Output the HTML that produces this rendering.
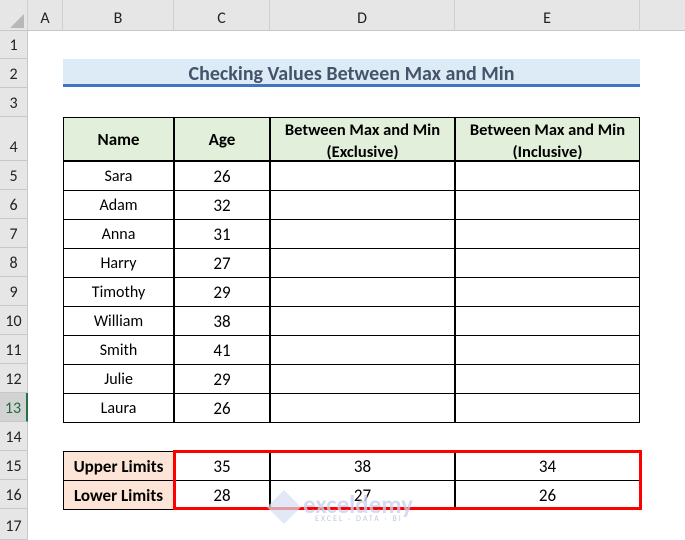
<!DOCTYPE html><html><head><style>
body{margin:0;width:685px;height:540px;overflow:hidden;background:#fff;font-family:Calibri,"Liberation Sans",sans-serif;position:relative}
.a{position:absolute;box-sizing:border-box}
.ch{top:0;height:31px;background:#e6e6e6;border-right:1px solid #d0d0d0;border-bottom:1px solid #c8c8c8;text-align:center;line-height:38px;font-size:16px;color:#222}
.rh{left:0;width:28px;background:#e6e6e6;border-bottom:1px solid #c8c8c8;border-right:1px solid #c8c8c8;text-align:center;font-size:16px;color:#222;display:flex;align-items:flex-end;justify-content:center;padding-bottom:3px}
.c{border:1px solid #000;display:flex;align-items:center;justify-content:center;font-size:16px;color:#000;text-align:center;margin:-1px 0 0 -1px}
.b{font-weight:bold}
</style></head><body>
<div class="a ch" style="left:0;width:28px"></div>
<div class="a" style="left:10px;top:14px;width:0;height:0;border-left:14px solid transparent;border-bottom:14px solid #b8b8b8"></div>
<div class="a ch" style="left:28px;width:35px">A</div>
<div class="a ch" style="left:63px;width:111px">B</div>
<div class="a ch" style="left:174px;width:96px">C</div>
<div class="a ch" style="left:270px;width:185px">D</div>
<div class="a ch" style="left:455px;width:185px">E</div>
<div class="a ch" style="left:640px;width:45px;border-right:none"></div>
<div class="a rh" style="top:31px;height:28px">1</div>
<div class="a rh" style="top:59px;height:29px">2</div>
<div class="a rh" style="top:88px;height:29px">3</div>
<div class="a rh" style="top:117px;height:44px">4</div>
<div class="a rh" style="top:161px;height:29px">5</div>
<div class="a rh" style="top:190px;height:29px">6</div>
<div class="a rh" style="top:219px;height:29px">7</div>
<div class="a rh" style="top:248px;height:29px">8</div>
<div class="a rh" style="top:277px;height:29px">9</div>
<div class="a rh" style="top:306px;height:29px">10</div>
<div class="a rh" style="top:335px;height:29px">11</div>
<div class="a rh" style="top:364px;height:29px">12</div>
<div class="a rh" style="top:393px;height:29px;background:#d2d2d2;color:#1e6b3a;border-right:2px solid #217346">13</div>
<div class="a rh" style="top:422px;height:29px">14</div>
<div class="a rh" style="top:451px;height:29px">15</div>
<div class="a rh" style="top:480px;height:29px">16</div>
<div class="a rh" style="top:509px;height:31px">17</div>

<div class="a" style="left:63px;top:59px;width:577px;height:28px;background:#ddebf7;border-bottom:3px solid #4472c4;text-align:center;font-weight:bold;font-size:20px;color:#44546a;line-height:30px">Checking Values Between Max and Min</div>

<div class="a c b" style="left:64px;top:118px;width:111px;height:44px;background:#e2efda;font-size:17px">Name</div>
<div class="a c b" style="left:175px;top:118px;width:96px;height:44px;background:#e2efda;font-size:17px">Age</div>
<div class="a c b" style="left:271px;top:118px;width:185px;height:44px;background:#e2efda;align-items:flex-start;padding-top:1px;line-height:22px;font-size:16.5px">Between Max and Min<br>(Exclusive)</div>
<div class="a c b" style="left:456px;top:118px;width:185px;height:44px;background:#e2efda;align-items:flex-start;padding-top:1px;line-height:22px;font-size:16.5px">Between Max and Min<br>(Inclusive)</div>
<div id="rows"></div>
<script>
var d=[["Sara",26],["Adam",32],["Anna",31],["Harry",27],["Timothy",29],["William",38],["Smith",41],["Julie",29],["Laura",26]],h="";
d.forEach(function(r,i){var t=162+i*29;
h+='<div class="a c" style="left:64px;top:'+t+'px;width:111px;height:30px">'+r[0]+'</div>';
h+='<div class="a c" style="left:175px;top:'+t+'px;width:96px;height:30px;font-size:17px">'+r[1]+'</div>';
h+='<div class="a c" style="left:271px;top:'+t+'px;width:185px;height:30px"></div>';
h+='<div class="a c" style="left:456px;top:'+t+'px;width:185px;height:30px"></div>';});
var L=[["Upper Limits",35,38,34],["Lower Limits",28,27,26]];
L.forEach(function(r,i){var t=452+i*29;
h+='<div class="a c b" style="left:64px;top:'+t+'px;width:111px;height:30px;background:#fce4d6;font-size:17px">'+r[0]+'</div>';
h+='<div class="a c" style="left:175px;top:'+t+'px;width:96px;height:30px;font-size:17px">'+r[1]+'</div>';
h+='<div class="a c" style="left:271px;top:'+t+'px;width:185px;height:30px;font-size:17px">'+r[2]+'</div>';
h+='<div class="a c" style="left:456px;top:'+t+'px;width:185px;height:30px;font-size:17px">'+r[3]+'</div>';});
document.getElementById("rows").innerHTML=h;
</script>
<div class="a" style="left:173px;top:450px;width:469px;height:60px;border:3px solid #ff0000"></div>
<div class="a" style="left:303px;top:489px;font-size:25px;font-weight:bold;color:#c9d3ee;opacity:.8">exceldemy</div>
<div class="a" style="left:315px;top:514px;font-size:8px;letter-spacing:2px;color:#c0c8dc">EXCEL · DATA · BI</div>
<div class="a" style="left:272px;top:495px;width:24px;height:24px;background:#d6def2;transform:rotate(45deg);opacity:.7"></div>
</body></html>
